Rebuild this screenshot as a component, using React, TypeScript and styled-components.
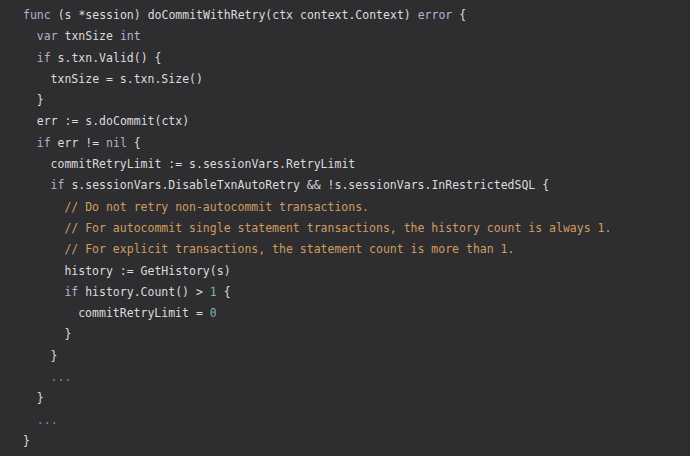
import React from "react";
import styled, { createGlobalStyle } from "styled-components";

const Global = createGlobalStyle`
  html, body { margin: 0; padding: 0; background: #2e2d30; }
  #root { min-height: 456px; }
`;

const Editor = styled.pre`
  margin: 0;
  width: 690px;
  height: 456px;
  box-sizing: border-box;
  padding: 5px 0 0 23px;
  background: #2e2d30;
  color: #dcdcdc;
  font-family: "DejaVu Sans Mono", "Liberation Mono", monospace;
  font-size: 11.5px;
  line-height: 21.3px;
  overflow: hidden;
  display: flex;
  flex-direction: column;
`;

const Line = styled.div<{ $indent: number }>`
  padding-left: ${(p) => p.$indent * 13.8}px;
  white-space: pre;
  height: 21.3px;
`;

const Kw = styled.span`
  color: #bcaed0;
`;
const Cm = styled.span`
  color: #cf9d60;
`;
const Num = styled.span`
  color: #78b8a4;
`;
const Dim = styled.span`
  color: #8c8c8f;
`;

type Part = string | React.ReactElement;

const lines: [number, Part[]][] = [
  [0, [<Kw key="a">func</Kw>, " (s *session) doCommitWithRetry(ctx context.Context) ", <Kw key="b">error</Kw>, " {"]],
  [1, [<Kw key="a">var</Kw>, " txnSize ", <Kw key="b">int</Kw>]],
  [1, [<Kw key="a">if</Kw>, " s.txn.Valid() {"]],
  [2, ["txnSize = s.txn.Size()"]],
  [1, ["}"]],
  [1, ["err := s.doCommit(ctx)"]],
  [1, [<Kw key="a">if</Kw>, " err != ", <Kw key="b">nil</Kw>, " {"]],
  [2, ["commitRetryLimit := s.sessionVars.RetryLimit"]],
  [2, [<Kw key="a">if</Kw>, " s.sessionVars.DisableTxnAutoRetry && !s.sessionVars.InRestrictedSQL {"]],
  [3, [<Cm key="a">// Do not retry non-autocommit transactions.</Cm>]],
  [3, [<Cm key="a">// For autocommit single statement transactions, the history count is always 1.</Cm>]],
  [3, [<Cm key="a">// For explicit transactions, the statement count is more than 1.</Cm>]],
  [3, ["history := GetHistory(s)"]],
  [3, [<Kw key="a">if</Kw>, " history.Count() > ", <Num key="b">1</Num>, " {"]],
  [4, ["commitRetryLimit = ", <Num key="a">0</Num>]],
  [3, ["}"]],
  [2, ["}"]],
  [2, [<Dim key="a">...</Dim>]],
  [1, ["}"]],
  [1, [<Dim key="a">...</Dim>]],
  [0, ["}"]],
];

export default function App() {
  return (
    <>
      <Global />
      <Editor>
        {lines.map(([indent, parts], i) => (
          <Line key={i} $indent={indent}>
            {parts}
          </Line>
        ))}
      </Editor>
    </>
  );
}
